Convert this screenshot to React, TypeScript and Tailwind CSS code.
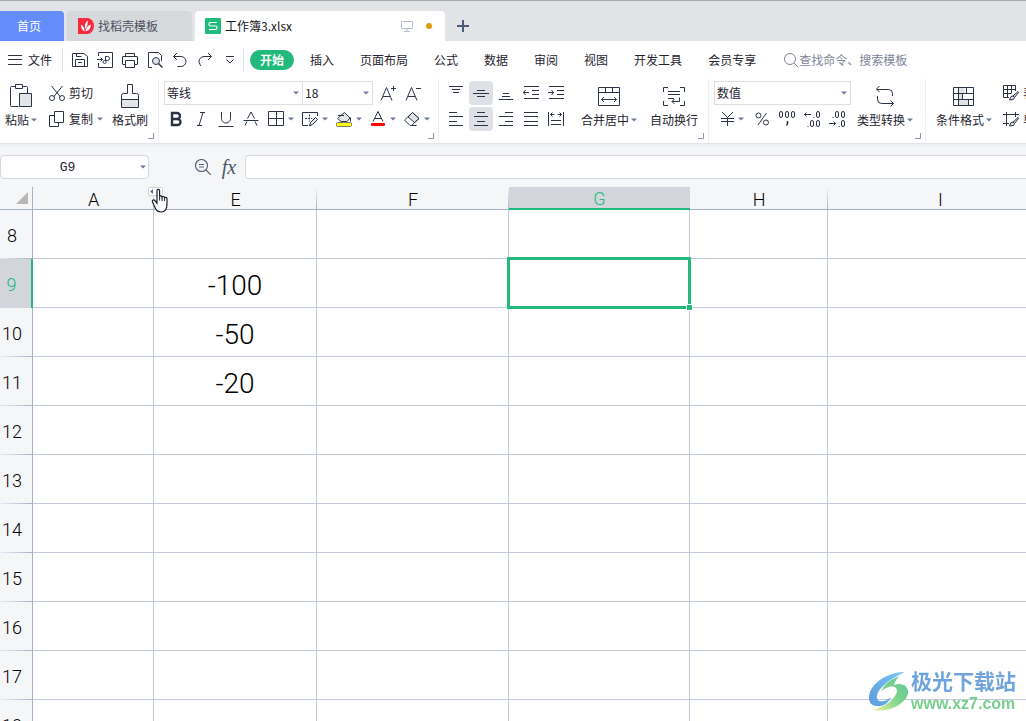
import type { ReactNode } from "react";
import clsx from "clsx";

type IconProps = {
  width?: number;
  height?: number;
  children: ReactNode;
};

type LabelProps = {
  text: string;
  caret?: boolean;
};

const MENU_ITEMS = [
  "插入",
  "页面布局",
  "公式",
  "数据",
  "审阅",
  "视图",
  "开发工具",
  "会员专享"
];

const COLUMNS = [
  { name: "A", width: "w-[121px]" },
  { name: "E", width: "w-[163px]" },
  { name: "F", width: "w-48" },
  { name: "G", width: "w-[181px]" },
  { name: "H", width: "w-[138px]" },
  { name: "I", width: "w-[225px]" }
];

const ROWS = [8, 9, 10, 11, 12, 13, 14, 15, 16, 17, 18];

const VALUES: Record<string, string> = {
  E9: "-100",
  E10: "-50",
  E11: "-20"
};

function Icon({ width = 16, height = 16, children }: IconProps) {
  return (
    <svg
      width={width}
      height={height}
      viewBox={`0 0 ${width} ${height}`}
      fill="none"
      stroke="#2b3346"
      className="shrink-0"
      aria-hidden="true"
    >
      {children}
    </svg>
  );
}

function Caret() {
  return (
    <svg width="6" height="4" viewBox="0 0 6 4" className="shrink-0" aria-hidden="true">
      <path d="M0 0.5h6L3 3.500z" fill="#6d7c99" />
    </svg>
  );
}

function Label({ text, caret }: LabelProps) {
  return (
    <span className="flex h-6 items-center gap-0.5 whitespace-nowrap">
      {text}
      {caret && <Caret />}
    </span>
  );
}

function BigButton({ icon, text, caret }: LabelProps & { icon: ReactNode }) {
  return (
    <button type="button" className="flex shrink-0 flex-col items-center pt-[3px]">
      <span className="flex h-6 items-center">{icon}</span>
      <Label text={text} caret={caret} />
    </button>
  );
}

function ToolButton({ label, active, children }: { label: string; active?: boolean; children: ReactNode }) {
  return (
    <button
      type="button"
      aria-label={label}
      className={clsx(
        "flex h-6 w-6 shrink-0 items-center justify-center rounded-sm",
        active && "bg-[#dde1e6]"
      )}
    >
      {children}
    </button>
  );
}

function SplitButton({ label, children }: { label: string; children: ReactNode }) {
  return (
    <button
      type="button"
      aria-label={label}
      className="flex h-6 w-[34px] shrink-0 items-center gap-1 pl-1"
    >
      {children}
      <Caret />
    </button>
  );
}

function Picker({ label, value, className }: { label: string; value: string; className: string }) {
  return (
    <div className={clsx("relative shrink-0", className)}>
      <select
        aria-label={label}
        className="block h-6 w-full appearance-none border border-[#dcdee3] bg-white pl-0.5 text-xs text-[#1f2430] outline-none"
      >
        <option>{value}</option>
      </select>
      <span className="pointer-events-none absolute inset-y-0 right-1 flex items-center">
        <Caret />
      </span>
    </div>
  );
}

function Group({ children, className, launcher = true }: { children: ReactNode; className: string; launcher?: boolean }) {
  return (
    <div className={clsx("relative flex shrink-0 border-r border-[#eceef1] pt-0.5", className)}>
      {children}
      {launcher && (
        <button type="button" aria-label="更多设置" className="absolute right-1 bottom-1">
          <svg width="6" height="6" viewBox="0 0 6 6" fill="none" stroke="#8b95ab">
            <path d="M5.5 0v5.5H0" />
          </svg>
        </button>
      )}
    </div>
  );
}

function TabBar() {
  return (
    <header className="flex h-[41px] shrink-0 items-end border-t border-[#a9abae] bg-[#e2e3e7] text-xs">
      <button type="button" className="h-[30px] w-16 rounded-tr-sm bg-[#648dfb] pr-1.5 text-white">
        首页
      </button>
      <button
        type="button"
        className="ml-[3px] flex h-[30px] w-[125px] items-center gap-1 rounded-t-sm bg-[#d7d8dc] pl-[11px] text-[#4c5160]"
      >
        <svg width="16" height="16" viewBox="0 0 16 16" aria-hidden="true">
          <path d="M0 0h9a7 8 0 0 1 0 16H0z" fill="#f8283b" />
          <path d="M9.500 2.500c.8 3-.2 6-2.500 8.500-.6-3.500.2-6.500 2.500-8.500z" fill="#fff" />
          <path d="M3 6.500c2.500 1.500 3.500 3.500 3.500 7C4 12 2.800 9.500 3 6.500z" fill="#fff" />
          <path d="M13 6.500c-.5 4-2 6-5.500 7 .3-3.500 2-6 5.500-7z" fill="#fff" />
        </svg>
        找稻壳模板
      </button>
      <button
        type="button"
        className="ml-[3px] flex h-[30px] w-[250px] items-center rounded-t-sm bg-white pr-[13px] pl-[10px] text-[#16181d]"
      >
        <svg width="16" height="16" viewBox="0 0 16 16" fill="none" aria-hidden="true">
          <rect width="16" height="16" rx="1" fill="#1fbb7d" />
          <path d="M12 4.500H5.500a1.500 1.500 0 0 0-1.500 1.500v.5A1.500 1.500 0 0 0 5.500 8h5A1.500 1.500 0 0 1 12 9.500v.5a1.500 1.500 0 0 1-1.500 1.500H4" stroke="#fff" strokeWidth="1.200" />
        </svg>
        <span className="ml-1">工作簿3.xlsx</span>
        <svg width="12" height="12" viewBox="0 0 12 12" fill="none" stroke="#b3bccd" className="ml-auto" aria-hidden="true">
          <path d="M1 1.500h10a.5.500 0 0 1 .5.500v6a.5.500 0 0 1-.5.500H1A.5.500 0 0 1 .5 8V2A.5.500 0 0 1 1 1.500zM6 8.500v3M3 11.500h6" />
        </svg>
        <span className="ml-[13px] size-1.5 rounded-full bg-[#e6980c]" />
      </button>
      <button type="button" aria-label="新建" className="ml-3 flex h-[30px] items-center">
        <svg width="12" height="12" viewBox="0 0 12 12" stroke="#4c5b78" strokeWidth="2">
          <path d="M6 0v12M0 6h12" />
        </svg>
      </button>
    </header>
  );
}

function MenuBar() {
  return (
    <nav className="flex h-[38px] shrink-0 items-center text-xs">
      <button type="button" className="ml-2 flex shrink-0 items-center gap-1.5">
        <Icon width={14} height={10}>
          <path d="M0 .5h14M0 4.500h14M0 9.500h14" />
        </Icon>
        文件
      </button>
      <span className="ml-[10px] h-6 w-px shrink-0 bg-[#dcdee3]" />
      <div className="flex shrink-0 items-center gap-px pl-[5px]">
        <ToolButton label="保存">
          <Icon>
            <path d="M.5 2v12.500h15V4.500L12 1.500H1a.5.500 0 0 0-.5.500zM4.500 1.500v3h5M3.500 14.500v-7h9v7M6 10.500h4" />
          </Icon>
        </ToolButton>
        <ToolButton label="输出为PDF">
          <Icon>
            <path d="M1.500 4V.5h14v15h-14V11M0 7.500h5.500M3.500 5.500l2 2-2 2" />
            <path d="M8.500 8.500v-4h2a2 2 0 0 1 0 4h-3a1.500 1.500 0 1 0 1.500 2v-2" />
          </Icon>
        </ToolButton>
        <ToolButton label="打印">
          <Icon>
            <path d="M3.500 4.500v-3h9v3M3.500 12.500H1a.5.500 0 0 1-.5-.5V5a.5.500 0 0 1 .5-.5h14a.5.500 0 0 1 .5.500v7a.5.500 0 0 1-.5.500h-2.500M3.500 8.500h9v7h-9z" />
          </Icon>
        </ToolButton>
        <ToolButton label="打印预览">
          <Icon>
            <path d="M5 15.500H1.500V.5h10l3 3V9" />
            <circle cx="9" cy="9" r="3.500" fill="#dfe2e7" />
            <path d="M11.500 11.500l4 4" strokeWidth="1.500" />
          </Icon>
        </ToolButton>
        <ToolButton label="撤销">
          <Icon>
            <path d="M5 1L1.500 4.500 5 8M1.500 4.500H9a5 5 0 0 1 0 10H5.500" />
          </Icon>
        </ToolButton>
        <ToolButton label="恢复">
          <Icon>
            <path d="M11 1l3.500 3.500L11 8M14.500 4.500H7a5 5 0 0 0-4 8l1 1.500" />
          </Icon>
        </ToolButton>
        <ToolButton label="自定义快速访问">
          <Icon width={8} height={8}>
            <path d="M0 .5h8M.5 3.500L4 7l3.500-3.500" />
          </Icon>
        </ToolButton>
      </div>
      <span className="ml-px h-6 w-px shrink-0 bg-[#dcdee3]" />
      <button type="button" className="mr-[3px] ml-1.5 h-5 w-11 shrink-0 rounded-full bg-[#22b97c] font-bold text-white">
        开始
      </button>
      {MENU_ITEMS.map((item) => (
        <button key={item} type="button" className="shrink-0 px-[13px]">
          {item}
        </button>
      ))}
      <label className="ml-[14px] flex min-w-0 items-center text-[#6b7280]">
        <Icon>
          <circle cx="7" cy="7" r="5.500" stroke="#7c8698" />
          <path d="M11 11l4 4" stroke="#7c8698" />
        </Icon>
        <input
          type="text"
          aria-label="查找命令、搜索模板"
          placeholder="查找命令、搜索模板"
          className="w-32 min-w-0 outline-none placeholder:text-[#7c8698]"
        />
      </label>
    </nav>
  );
}

function ClipboardGroup() {
  return (
    <Group className="pr-[10px] pl-[5px]">
      <BigButton
        text="粘贴"
        caret
        icon={
          <Icon width={22} height={24}>
            <path d="M5.500 2.500h-4a1 1 0 0 0-1 1v18a1 1 0 0 0 1 1h7M12.500 2.500h4a1 1 0 0 1 1 1v6M5.500.5h7v4h-7z" />
            <path d="M9.500 9.500h12v13h-12z" fill="#e3e5e9" />
          </Icon>
        }
      />
      <div className="ml-3 flex flex-col gap-0.5">
        <button type="button" className="flex h-6 items-center gap-1">
          <Icon>
            <path d="M2.500 1l9 11M13.500 1l-9 11" />
            <circle cx="3" cy="13" r="2.500" />
            <circle cx="13" cy="13" r="2.500" />
          </Icon>
          剪切
        </button>
        <button type="button" className="flex h-6 items-center gap-1">
          <Icon>
            <path d="M5.500.5h9v11h-9zM5.500 4.500h-5v11h9v-4" />
          </Icon>
          复制
          <Caret />
        </button>
      </div>
      <div className="ml-[9px] flex">
        <BigButton
          text="格式刷"
          icon={
            <Icon width={18} height={24}>
              <path d="M.5 15.500h17v8H.5z" fill="#e3e5e9" />
              <path d="M6.500 9.500v-9h5v9h4a2 2 0 0 1 2 2v4H.5v-4a2 2 0 0 1 2-2z" />
            </Icon>
          }
        />
      </div>
    </Group>
  );
}

function FontGroup() {
  return (
    <Group className="pr-1 pl-[5px]">
      <div className="flex flex-col gap-0.5">
        <div className="flex gap-[3px]">
          <div className="flex">
            <Picker label="字体" value="等线" className="w-[139px]" />
            <Picker label="字号" value="18" className="-ml-px w-[71px]" />
          </div>
          <div className="flex gap-px">
            <ToolButton label="增大字号">
              <Icon>
                <path d="M1 15.500L6.500 2.500l5.500 13M3 11.500h7M13.500 1v5M11 3.500h5" />
              </Icon>
            </ToolButton>
            <ToolButton label="减小字号">
              <Icon>
                <path d="M1 15.500L6.500 2.500l5.500 13M3 11.500h7M11 3.500h5" />
              </Icon>
            </ToolButton>
          </div>
        </div>
        <div className="flex">
          <div className="flex gap-px pr-px">
            <ToolButton label="加粗">
              <Icon>
                <path d="M4 2h5a3 3 0 0 1 0 6H4zM4 8h5.500a3 3 0 0 1 0 6H4z" strokeWidth="2.400" />
              </Icon>
            </ToolButton>
            <ToolButton label="倾斜">
              <Icon>
                <path d="M7 1.500h5M4 14.500h5M10 1.500l-4 13" />
              </Icon>
            </ToolButton>
            <ToolButton label="下划线">
              <Icon>
                <path d="M3.500 1v6.500a4.500 4.500 0 0 0 9 0V1M.5 15.500h15" />
              </Icon>
            </ToolButton>
            <ToolButton label="删除线">
              <Icon>
                <path d="M2 14.500l2-4M14 14.500l-2-4M4.500 7.500L8 1l3.500 6.500M.5 9.500h15" />
              </Icon>
            </ToolButton>
          </div>
          <SplitButton label="边框">
            <Icon>
              <path d="M.5.5h15v14H.5zM8.500.5v14M.5 7.500h15" />
            </Icon>
          </SplitButton>
          <SplitButton label="绘图边框">
            <Icon>
              <path d="M15.500 5V1.500H.5v13H6" />
              <path d="M7.500 3.500v7M3 7.500h7" strokeDasharray="2 1" />
              <path d="M7.500 15l1-3.500 5-5 2 2-5 5z" fill="#dfe2e7" />
            </Icon>
          </SplitButton>
          <SplitButton label="填充颜色">
            <Icon>
              <path d="M2.500 6.500l6-5 5.500 5.500-3 3.500H5L1.500 7.500zM2 4.500h6" fill="#e3e5e9" />
              <path d="M14.500 6.500v4" />
              <rect x=".5" y="11.500" width="15" height="4" rx="1" fill="#ffff00" stroke="#77797c" />
            </Icon>
          </SplitButton>
          <SplitButton label="字体颜色">
            <Icon>
              <path d="M3 10.500L8 .5l5 10M4.500 7.500h7" />
              <rect x="1" y="12" width="14" height="3" rx="1" fill="#fb0505" stroke="none" />
            </Icon>
          </SplitButton>
          <SplitButton label="清除">
            <Icon>
              <path d="M.5 9L8.500 1.500l6.500 6-7.500 7H6z" />
              <path d="M4 6l4.500-4.500 6.500 6-4.500 4z" fill="#e0e2e6" />
              <path d="M7.500 14.500h5" />
            </Icon>
          </SplitButton>
        </div>
      </div>
    </Group>
  );
}

function AlignGroup() {
  return (
    <Group className="pr-[10px] pl-[5px]">
      <div className="flex flex-col gap-0.5">
        <div className="flex gap-px">
          <ToolButton label="顶端对齐">
            <Icon>
              <path d="M1 1.500h14M4 4.500h8M5 7.500h6" />
            </Icon>
          </ToolButton>
          <ToolButton label="垂直居中" active>
            <Icon>
              <path d="M4 5.500h8M0 8.500h16M4 11.500h8" />
            </Icon>
          </ToolButton>
          <ToolButton label="底端对齐">
            <Icon>
              <path d="M5 8.500h6M4 11.500h8M1 14.500h14" />
            </Icon>
          </ToolButton>
          <ToolButton label="减少缩进">
            <Icon>
              <path d="M1 1.500h15M9 5.500h7M9 9.500h7M1 13.500h15M0 7.500h6M2.500 5L0.500 7.500 2.500 10" />
            </Icon>
          </ToolButton>
          <ToolButton label="增加缩进">
            <Icon>
              <path d="M1 1.500h15M9 5.500h7M9 9.500h7M1 13.500h15M0 7.500h6M3.500 5l2 2.500-2 2.500" />
            </Icon>
          </ToolButton>
        </div>
        <div className="flex gap-px">
          <ToolButton label="左对齐">
            <Icon>
              <path d="M1 1.500h8M1 5.500h14M1 10.500h8M1 14.500h14" />
            </Icon>
          </ToolButton>
          <ToolButton label="水平居中" active>
            <Icon>
              <path d="M4 1.500h8M1 5.500h14M4 10.500h8M1 14.500h14" />
            </Icon>
          </ToolButton>
          <ToolButton label="右对齐">
            <Icon>
              <path d="M7 1.500h8M1 5.500h14M7 10.500h8M1 14.500h14" />
            </Icon>
          </ToolButton>
          <ToolButton label="两端对齐">
            <Icon>
              <path d="M1 1.500h14M1 5.500h14M1 10.500h14M1 14.500h14" />
            </Icon>
          </ToolButton>
          <ToolButton label="分散对齐">
            <Icon>
              <path d="M.5 1v14M15.500 1v14M2.500 3.500h4M9.500 3.500h4M4.500 1.500l-2 2 2 2M11.500 1.500l2 2-2 2M3 9.500h10M3 13.500h10" />
            </Icon>
          </ToolButton>
        </div>
      </div>
      <div className="ml-[13px] flex gap-[13px]">
        <BigButton
          text="合并居中"
          caret
          icon={
            <Icon width={22} height={20}>
              <path d="M.5 1.500h21v18H.5zM.5 6.500h21M7.500 1.500v5M14.500 1.500v5M3.500 13.500h15M6 11l-2.500 2.500L6 16M16 11l2.500 2.500L16 16" />
            </Icon>
          }
        />
        <BigButton
          text="自动换行"
          icon={
            <Icon width={22} height={20}>
              <path d="M5 1.500H.5V6M17 1.500h4.500V6M.5 15v4.500H5M21.500 15v4.500H17M5 5.500h12M5 8.500h12M5 12.500h6M16.500 11.500v4H9M11.500 13L9 15.500l2.500 2.500" />
            </Icon>
          }
        />
      </div>
    </Group>
  );
}

function NumberGroup() {
  return (
    <Group className="pr-3 pl-[5px]">
      <div className="flex flex-col gap-0.5">
        <Picker label="数字格式" value="数值" className="w-[137px]" />
        <div className="flex gap-px">
          <SplitButton label="货币">
            <Icon>
              <path d="M4 1l5.500 5.500L15 1M3 7.500h13M3 10.500h13M9.500 6.500V15" />
            </Icon>
          </SplitButton>
          <div className="ml-px flex gap-px">
            <ToolButton label="百分比">
              <Icon>
                <circle cx="4.500" cy="4.500" r="2.500" />
                <circle cx="12" cy="11.500" r="2.500" />
                <path d="M12.500 2l-8.500 12" />
              </Icon>
            </ToolButton>
            <ToolButton label="千位分隔">
              <Icon>
                <rect x=".5" y=".5" width="3" height="6" rx="1.500" />
                <rect x="6.500" y=".5" width="3" height="6" rx="1.500" />
                <rect x="12.500" y=".5" width="3" height="6" rx="1.500" />
                <path d="M8.500 10v2.500l-1 2" strokeWidth="1.600" />
              </Icon>
            </ToolButton>
            <ToolButton label="增加小数位">
              <Icon>
                <path d="M0 3.500h7M2.500 1.500l-2 2 2 2M9.500 6.500h1M3.500 15.500h1" />
                <rect x="12.500" y=".5" width="3" height="6" rx="1.500" />
                <rect x="6.500" y="9.500" width="3" height="6" rx="1.500" />
                <rect x="12.500" y="9.500" width="3" height="6" rx="1.500" />
              </Icon>
            </ToolButton>
            <ToolButton label="减少小数位">
              <Icon>
                <path d="M0 12.500h6.500M4.500 10.500l2 2-2 2M3.500 6.500h1M9.500 15.500h1" />
                <rect x="6.500" y=".5" width="3" height="6" rx="1.500" />
                <rect x="12.500" y=".5" width="3" height="6" rx="1.500" />
                <rect x="12.500" y="9.500" width="3" height="6" rx="1.500" />
              </Icon>
            </ToolButton>
          </div>
        </div>
      </div>
      <div className="ml-1.5 flex">
        <BigButton
          text="类型转换"
          caret
          icon={
            <Icon width={20} height={22}>
              <path d="M4.500 1L1.500 4l3 3M1.500 4.500h12a4 4 0 0 1 4 4V11M15.500 15.500l3 3-3 3M18.500 18.500h-12a4 4 0 0 1-4-4V11" />
            </Icon>
          }
        />
      </div>
    </Group>
  );
}

function StyleGroup() {
  return (
    <Group className="grow pl-[10px]" launcher={false}>
      <BigButton
        text="条件格式"
        caret
        icon={
          <Icon width={22} height={20}>
            <path d="M5.500 1.500h6v6h-6zM5.500 7.500h4v6h-4zM5.500 13.500h10v6h-10z" fill="#dfe2e7" stroke="none" />
            <path d="M.5 1.500h20v18H.5zM.5 7.500h20M.5 13.500h20M5.500 1.500v18M13.500 1.500v6M9.500 7.500v6M15.500 13.500v6" />
          </Icon>
        }
      />
      <div className="ml-[11px] flex flex-col gap-0.5">
        <button type="button" className="flex h-6 items-center gap-1 whitespace-nowrap">
          <Icon>
            <path d="M6 12.500H.5V.5h12V6M.5 4.500h12M.5 8.500h8M4.500 .5v12M8.500 .5V8" />
            <path d="M6.500 15l1.500-3.500 2-.5 1.500 1.500-1 2zM10 11l5-4.500.5 1-4 5" fill="#dfe2e7" />
          </Icon>
          表格样式
        </button>
        <button type="button" className="flex h-6 items-center gap-1 whitespace-nowrap">
          <Icon>
            <path d="M0 3.500h16M3.500 1v14M12.500 1v5M0 12.500h6" />
            <path d="M6.500 15l1.500-3.500 2-.5 1.500 1.500-1 2zM10 11l5-4.500.5 1-4 5" fill="#dfe2e7" />
          </Icon>
          单元格样式
        </button>
      </div>
    </Group>
  );
}

function FormulaBar() {
  return (
    <div className="flex h-11 shrink-0 items-start border-t border-[#e4e5e8] bg-[linear-gradient(#ebecef,#f5f6f8_4px)] pt-[11px]">
      <div className="relative w-[149px] shrink-0">
        <input
          type="text"
          aria-label="名称框"
          defaultValue="G9"
          className="block h-6 w-full rounded-sm border border-[#d5d8de] bg-white pr-3.5 text-center font-['Liberation_Mono','Noto_Sans_CJK_SC',monospace] text-[13px] outline-none"
        />
        <span className="pointer-events-none absolute inset-y-0 right-[3px] flex items-center">
          <Caret />
        </span>
      </div>
      <div className="ml-[42px] flex">
        <ToolButton label="查找">
          <svg width="16" height="16" viewBox="0 0 16 16" fill="none" stroke="#5a6478" strokeWidth="1.200">
            <circle cx="6.500" cy="6.500" r="6" />
            <path d="M11 11l5 5M4 5.500h5M4 8h5" />
          </svg>
        </ToolButton>
        <button
          type="button"
          className="h-6 w-7 font-['Liberation_Serif',serif] text-xl leading-5 text-[#4d576b] italic"
        >
          fx
        </button>
      </div>
      <input
        type="text"
        aria-label="编辑栏"
        className="ml-0.5 h-6 min-w-0 grow rounded-l-sm border border-r-0 border-[#d5d8de] bg-white px-1 outline-none"
      />
    </div>
  );
}

function HiddenColumnsHandle() {
  return (
    <svg
      width="24"
      height="28"
      viewBox="0 0 24 28"
      className="pointer-events-none absolute top-0 -right-[18px] z-20"
      aria-hidden="true"
    >
      <rect x=".5" y=".5" width="14" height="8" rx="1" fill="#fff" stroke="#cdd1da" />
      <path d="M5 2v5L2 4.500z" fill="#5f6c88" />
      <path
        d="M9 3.500c0-1.600 2.600-1.600 2.600 0v6.200c.3-1.200 2.400-1 2.500.4.500-1 2.400-.7 2.500.6.700-.8 2.400-.4 2.400 1v5c0 5-1.500 8.300-6 8.300-3.500 0-4.800-1.600-6-4.500l-2.500-5.500c-.8-1.800 1.400-2.800 2.500-1.300l2 2.500z"
        fill="#fff"
        stroke="#1c1f2b"
        strokeWidth="1.200"
      />
      <path d="M11.600 9.500v4M14.100 10.500v3.500M16.600 11v3" stroke="#1c1f2b" />
    </svg>
  );
}

function Sheet() {
  return (
    <main className="min-h-0 grow overflow-hidden bg-[#f5f6f8]">
      <table className="w-max min-w-full table-fixed border-separate border-spacing-0 font-[Roboto,'Noto_Sans_CJK_SC',sans-serif] text-lg font-light text-black">
        <colgroup>
          <col className="w-[33px]" />
          {COLUMNS.map((column) => (
            <col key={column.name} className={column.width} />
          ))}
        </colgroup>
        <thead>
          <tr className="h-[23px]">
            <th aria-label="全选" className="border-r border-b border-[#a7b1cb] p-0">
              <svg width="12" height="12" viewBox="0 0 12 12" className="ml-4">
                <path d="M12 0v12H0z" fill="#b7b7b7" />
              </svg>
            </th>
            {COLUMNS.map((column) => (
              <th
                key={column.name}
                scope="col"
                className={clsx(
                  "relative p-0 pt-[3px] leading-[18px] font-light",
                  column.name === "G"
                    ? "border-b-2 border-[#22b97c] bg-[#d2d5dc] text-[#22b97c]"
                    : "border-b border-[#a7b1cb] bg-[linear-gradient(#f5f6f8,#a7b1cb)] bg-[length:1px_100%] bg-right bg-no-repeat"
                )}
              >
                {column.name}
                {column.name === "A" && <HiddenColumnsHandle />}
              </th>
            ))}
          </tr>
        </thead>
        <tbody>
          {ROWS.map((row) => (
            <tr key={row} className="h-[49px]">
              <th
                scope="row"
                className={clsx(
                  "p-0 pt-0.5 pr-2 font-light",
                  row === 9
                    ? "border-r-2 border-[#22b97c] bg-[#d2d5dc] text-[#22b97c]"
                    : "border-r border-[#a7b1cb] bg-[linear-gradient(to_right,#e6e9ef,#a7b1cb)] bg-[length:100%_1px] bg-bottom bg-no-repeat"
                )}
              >
                {row}
              </th>
              {COLUMNS.map((column) => (
                <td
                  key={column.name}
                  className="relative border-r border-b border-[#c2c9da] bg-white p-0 pt-1.5 text-center text-[28px] leading-8"
                >
                  {VALUES[`${column.name}${row}`]}
                  {column.name === "G" && row === 9 && (
                    <span className="absolute -inset-0.5 z-10 border-3 border-[#22b97c]">
                      <span className="absolute -right-[5px] -bottom-[5px] box-content size-[5px] border border-white bg-[#22b97c]" />
                    </span>
                  )}
                </td>
              ))}
            </tr>
          ))}
        </tbody>
      </table>
    </main>
  );
}

function SiteMark() {
  return (
    <div className="pointer-events-none fixed right-[10px] bottom-[7px] z-30 flex items-center">
      <svg width="44" height="44" viewBox="0 0 44 44" aria-hidden="true">
        <defs>
          <linearGradient id="mark-blue" x1="0" y1="1" x2="1" y2="0">
            <stop offset="0" stopColor="#5b9be0" />
            <stop offset="1" stopColor="#7cc6f0" />
          </linearGradient>
          <linearGradient id="mark-green" x1="0" y1="1" x2="1" y2="0">
            <stop offset="0" stopColor="#ecef9e" />
            <stop offset="0.500" stopColor="#7fd48d" />
            <stop offset="1" stopColor="#5bc79a" />
          </linearGradient>
        </defs>
        <path d="M38 2C25 2 12 8 5 18c-5 8-4 17 4 18 7 1 13-3 15-9-4 4-10 6-13 3-4-5 3-17 27-28z" fill="url(#mark-blue)" />
        <path d="M33 6C24 9 17 14 14 21c6-4 12-6 15-3 4 5-5 17-23 22 16 3 32-6 35-16 1-6-3-10-9-10-2 0-3 0-5 1 1-4 3-7 6-9z" fill="url(#mark-green)" />
      </svg>
      <div className="flex flex-col">
        <span className="font-['Liberation_Sans','Noto_Sans_CJK_SC',sans-serif] text-[21px] leading-6 font-bold text-[#6fa5dc]">
          极光下载站
        </span>
        <span className="font-['Liberation_Sans',sans-serif] text-base leading-5 font-bold text-[#77d08d]">
          www.xz7.com
        </span>
      </div>
    </div>
  );
}

export default function App() {
  return (
    <div className="flex h-screen flex-col overflow-hidden bg-white font-['Noto_Sans_CJK_SC',sans-serif] text-[#1f2430]">
      <TabBar />
      <MenuBar />
      <section aria-label="开始" className="flex h-16 shrink-0 overflow-hidden text-xs">
        <ClipboardGroup />
        <FontGroup />
        <AlignGroup />
        <NumberGroup />
        <StyleGroup />
      </section>
      <FormulaBar />
      <Sheet />
      <SiteMark />
    </div>
  );
}
